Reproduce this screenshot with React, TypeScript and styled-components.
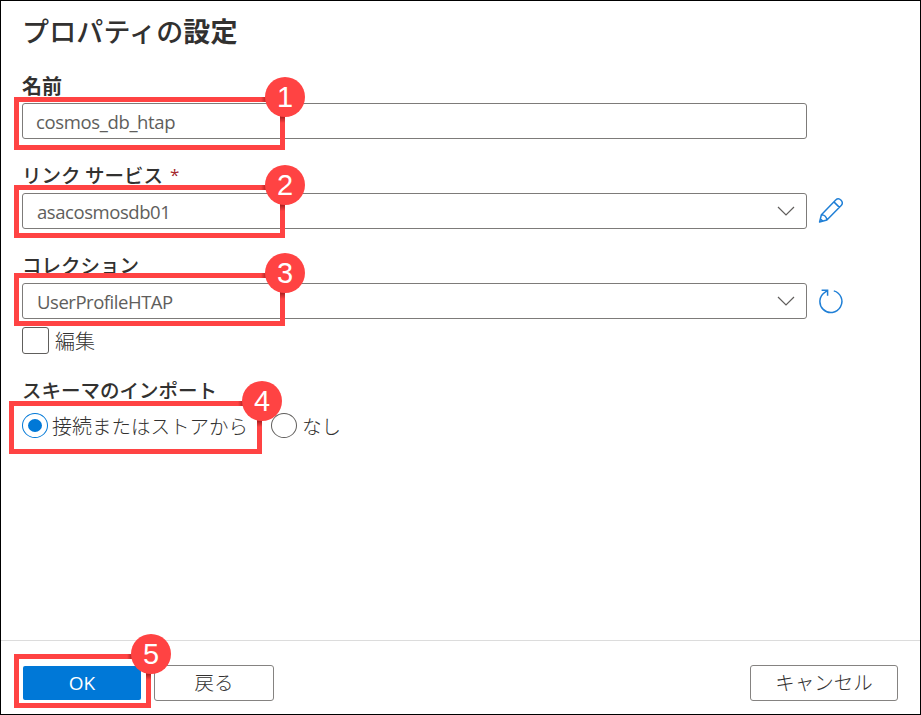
import React from "react";
import styled, { createGlobalStyle } from "styled-components";

const GlobalStyle = createGlobalStyle`
  *, *::before, *::after { box-sizing: border-box; }
  body { margin: 0; background: #fff; }
  button { margin: 0; }
`;

const Panel = styled.main`
  width: 921px;
  height: 715px;
  display: flex;
  flex-direction: column;
  overflow: hidden;
  border: 1px solid #000;
  background: #fff;
  color: #323130;
  font-family: "Noto Sans CJK JP", "Open Sans", sans-serif;
  font-size: 19.5px;
`;

const Body = styled.div`
  flex: 1;
  display: flex;
  flex-direction: column;
  padding: 11px 21px 0;
`;

const Title = styled.h1`
  margin: 0;
  height: 38px;
  font-size: 27px;
  line-height: 38px;
  font-weight: 500;
  letter-spacing: 0.15px;
  white-space: nowrap;
`;

const Kanji = styled.span<{ $weight: number; $size?: number }>`
  font-size: ${(p) => (p.$size ? `${p.$size}px` : "inherit")};
  font-weight: ${(p) => p.$weight};
`;

const Field = styled.section<{ $top: number }>`
  margin-top: ${(p) => p.$top}px;
`;

const Label = styled.div<{ $gap: number }>`
  height: 30px;
  margin-bottom: ${(p) => p.$gap}px;
  line-height: 30px;
  font-size: 19.5px;
  font-weight: 500;
  white-space: nowrap;
`;

const Required = styled.span`
  display: inline-block;
  margin-left: 7px;
  color: #a4262c;
  font-family: "Open Sans", sans-serif;
  font-size: 17px;
  line-height: 24px;
  font-weight: 400;
  vertical-align: 2px;
`;

const ControlRow = styled.div`
  position: relative;
  display: flex;
  align-items: center;
  gap: 11px;
  height: 36px;
`;

const Control = styled.div<{ $indent?: number }>`
  display: flex;
  align-items: center;
  justify-content: space-between;
  width: 785px;
  height: 36px;
  padding: 0 11px 0 ${(p) => p.$indent ?? 14}px;
  border: 1px solid #7d7b79;
  border-radius: 3px;
  color: #605e5c;
`;

const Value = styled.span<{ $spacing: number }>`
  padding-top: 1px;
  font-family: "Open Sans", "Noto Sans", sans-serif;
  font-size: 18.5px;
  line-height: 34px;
  letter-spacing: ${(p) => p.$spacing}px;
`;

const Highlight = styled.div<{ $left: number; $top: number; $width: number; $height: number }>`
  position: absolute;
  left: ${(p) => p.$left}px;
  top: ${(p) => p.$top}px;
  width: ${(p) => p.$width}px;
  height: ${(p) => p.$height}px;
  border: 5px solid #ff4343;
  pointer-events: none;
  z-index: 1;

  &::before,
  &::after {
    content: "";
    position: absolute;
  }

  &::before {
    top: -5px;
    right: 12px;
    width: 7px;
    height: 5px;
    background: linear-gradient(to left, rgba(90, 0, 0, 0.4) 40%, transparent);
  }

  &::after {
    top: 12px;
    right: -5px;
    width: 5px;
    height: 9px;
    background: linear-gradient(rgba(90, 0, 0, 0.55) 30%, transparent);
  }
`;

const Badge = styled.span`
  position: absolute;
  top: -25px;
  right: -25px;
  z-index: 1;
  width: 40px;
  height: 40px;
  border-radius: 50%;
  background: #ff4343;
  color: #fff;
  font: 400 29px/41px "Liberation Sans", Arial, sans-serif;
  text-align: center;
`;

const CheckRow = styled.label`
  display: flex;
  align-items: center;
  gap: 6px;
  height: 27px;
  margin-top: 8px;
  font-size: 20px;
  line-height: 25px;
  font-weight: 300;
`;

const CheckBox = styled.span`
  width: 27px;
  height: 27px;
  border: 1px solid #605e5c;
  border-radius: 3px;
`;

const RadioRow = styled.div`
  position: relative;
  display: flex;
  align-items: center;
  height: 25px;
`;

const Option = styled.label<{ $width?: number; $gap: number }>`
  display: flex;
  align-items: center;
  gap: ${(p) => p.$gap}px;
  width: ${(p) => (p.$width ? `${p.$width}px` : "auto")};
  font-weight: 300;
  line-height: 25px;
  white-space: nowrap;
`;

const Radio = styled.span<{ $checked?: boolean }>`
  display: grid;
  place-items: center;
  width: 26px;
  height: 25px;
  flex: none;
  border: 1px solid ${(p) => (p.$checked ? "#0078d7" : "#605e5c")};
  border-radius: 50%;

  &::after {
    content: "";
    width: 14px;
    height: 13px;
    border-radius: 50%;
    background: ${(p) => (p.$checked ? "#0078d7" : "transparent")};
  }
`;

const Footer = styled.footer`
  position: relative;
  display: flex;
  align-items: flex-start;
  height: 74px;
  padding: 24px 22px 0 21px;
  border-top: 1px solid #dcdcdc;
`;

const Button = styled.button<{ $width: number; $primary?: boolean; $end?: boolean }>`
  width: ${(p) => p.$width}px;
  height: ${(p) => (p.$primary ? 34 : 36)}px;
  margin-top: ${(p) => (p.$primary ? 1 : 0)}px;
  margin-left: ${(p) => (p.$end ? "auto" : p.$primary ? "1px" : "13px")};
  padding: 0 0 2px;
  border: ${(p) => (p.$primary ? "0" : "1px solid #858381")};
  border-radius: ${(p) => (p.$primary ? 2 : 3)}px;
  background: ${(p) => (p.$primary ? "#0078d7" : "#fff")};
  color: ${(p) => (p.$primary ? "#fff" : "#323130")};
  font-family: ${(p) => (p.$primary ? '"Open Sans"' : '"Noto Sans CJK JP"')}, sans-serif;
  font-size: ${(p) => (p.$primary ? 19 : 19.5)}px;
  font-weight: ${(p) => (p.$primary ? 400 : 300)};
  line-height: ${(p) => (p.$primary ? 34 : 32)}px;
`;

const Icon = styled.svg`
  display: block;
  flex: none;
  fill: none;
`;

function Callout({ step, left, top, width, height = 53 }: { step: number; left: number; top: number; width: number; height?: number }) {
  return (
    <Highlight $left={left} $top={top} $width={width} $height={height}>
      <Badge>{step}</Badge>
    </Highlight>
  );
}

function Chevron() {
  return (
    <Icon width="18" height="10" viewBox="0 0 18 10" stroke="#605e5c" strokeWidth="1.2">
      <path d="M1 1l8 8 8-8" />
    </Icon>
  );
}

function Pencil() {
  return (
    <Icon width="25" height="28" viewBox="0 0 25 28" stroke="#1f7fd6" strokeWidth="1.5" strokeLinejoin="round">
      <path d="M1.600 25L3.400 17.700L17.700 3C21.200 -.4 26.700 5 23.200 8.500L8.900 23ZM3.400 17.700C6.400 17.800 8.700 20.100 8.900 23M15.900 4.900L21.400 10.400M2.400 21.700L4.900 24.200" />
    </Icon>
  );
}

function Refresh() {
  return (
    <Icon width="25" height="26" viewBox="0 0 25 26" stroke="#1f7fd6" strokeWidth="1.5">
      <path d="M15.800 2.900A11 11 0 1 1 7.200 4.100L9.600 2.400M3.600 2.200H9.600V7.800" />
    </Icon>
  );
}

export default function App() {
  return (
    <>
      <GlobalStyle />
      <Panel>
        <Body>
          <Title>
            プロパティの<Kanji $weight={700}>設定</Kanji>
          </Title>
          <Field $top={21}>
            <Label $gap={2}>
              <Kanji $weight={700} $size={20}>名前</Kanji>
            </Label>
            <ControlRow>
              <Control $indent={13}>
                <Value $spacing={-0.36}>cosmos_db_htap</Value>
              </Control>
              <Callout step={1} left={-8} top={-6} width={271} />
            </ControlRow>
          </Field>
          <Field $top={21}>
            <Label $gap={3}>
              リンク サービス<Required>*</Required>
            </Label>
            <ControlRow>
              <Control>
                <Value $spacing={-0.44}>asacosmosdb01</Value>
                <Chevron />
              </Control>
              <Pencil />
              <Callout step={2} left={-8} top={-8} width={271} />
            </ControlRow>
          </Field>
          <Field $top={21}>
            <Label $gap={3}>コレクション</Label>
            <ControlRow>
              <Control>
                <Value $spacing={-0.46}>UserProfileHTAP</Value>
                <Chevron />
              </Control>
              <Refresh />
              <Callout step={3} left={-8} top={-10} width={271} />
            </ControlRow>
            <CheckRow>
              <CheckBox />
              編集
            </CheckRow>
          </Field>
          <Field $top={21}>
            <Label $gap={8}>スキーマのインポート</Label>
            <RadioRow>
              <Option $width={249} $gap={4}>
                <Radio $checked />
                <span>
                  <Kanji $weight={300} $size={20}>接続</Kanji>またはストアから
                </span>
              </Option>
              <Option $gap={5}>
                <Radio />
                なし
              </Option>
              <Callout step={4} left={-13} top={-12} width={253} />
            </RadioRow>
          </Field>
        </Body>
        <Footer>
          <Button $width={118} $primary>OK</Button>
          <Button $width={120}>戻る</Button>
          <Button $width={148} $end>キャンセル</Button>
          <Callout step={5} left={13} top={13} width={137} height={54} />
        </Footer>
      </Panel>
    </>
  );
}
